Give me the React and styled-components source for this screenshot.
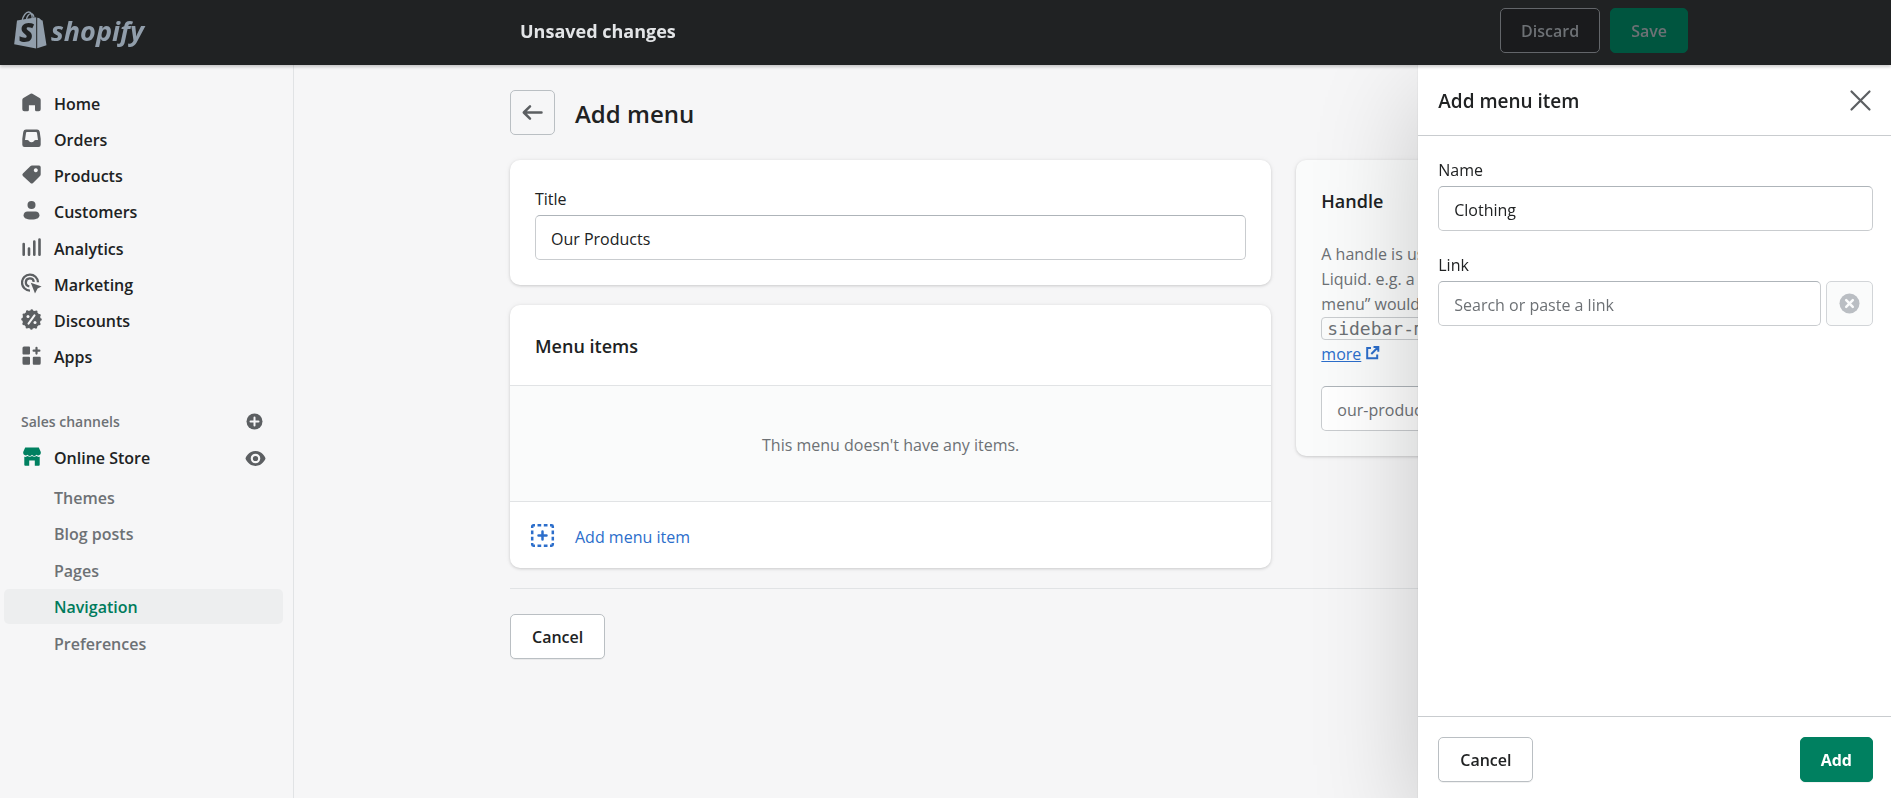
import { useState } from "react"
import styled, { createGlobalStyle } from "styled-components"

const mainLinks = [
    { label: "Home", icon: HomeIcon },
    { label: "Orders", icon: OrdersIcon },
    { label: "Products", icon: ProductsIcon },
    { label: "Customers", icon: CustomersIcon },
    { label: "Analytics", icon: AnalyticsIcon },
    { label: "Marketing", icon: MarketingIcon },
    { label: "Discounts", icon: DiscountsIcon },
    { label: "Apps", icon: AppsIcon },
]

const storeLinks = ["Themes", "Blog posts", "Pages", "Navigation", "Preferences"]

export default function App() {
    const [title, setTitle] = useState("Our Products")
    const [name, setName] = useState("Clothing")

    return (
        <>
            <GlobalStyle />
            <TopBar>
                <Logo href="#">
                    <BagIcon />
                    <span>shopify</span>
                </Logo>
                <SaveBar>
                    <h2>Unsaved changes</h2>
                    <BarButton disabled>Discard</BarButton>
                    <BarButton disabled $save>Save</BarButton>
                </SaveBar>
            </TopBar>
            <Body>
                <Sidebar>
                    <NavList>
                        {mainLinks.map(({ label, icon: Icon }) => (
                            <li key={label}>
                                <NavLink href="#"><Icon />{label}</NavLink>
                            </li>
                        ))}
                    </NavList>
                    <SectionTitle>
                        <span>Sales channels</span>
                        <IconButton aria-label="Add sales channel"><PlusIcon /></IconButton>
                    </SectionTitle>
                    <StoreRow>
                        <NavLink href="#"><StoreIcon />Online Store</NavLink>
                        <IconButton aria-label="View your online store"><EyeIcon /></IconButton>
                    </StoreRow>
                    <SubList>
                        {storeLinks.map((label) => (
                            <li key={label}>
                                <SubLink href="#" $active={label === "Navigation"}>{label}</SubLink>
                            </li>
                        ))}
                    </SubList>
                </Sidebar>
                <Main>
                    <Page>
                        <PageHeader>
                            <BackButton aria-label="Back"><BackIcon /></BackButton>
                            <h1>Add menu</h1>
                        </PageHeader>
                        <Columns>
                            <Stack>
                                <Card $padded>
                                    <Label htmlFor="title">Title</Label>
                                    <Input id="title" value={title} onChange={(e) => setTitle(e.target.value)} />
                                </Card>
                                <Card>
                                    <CardHeader>Menu items</CardHeader>
                                    <EmptyItems>This menu doesn't have any items.</EmptyItems>
                                    <AddItem><AddItemIcon />Add menu item</AddItem>
                                </Card>
                            </Stack>
                            <Card as="aside" $padded $subdued>
                                <HandleTitle id="handle-title">Handle</HandleTitle>
                                <HandleText>
                                    A handle is used to reference a menu in Liquid. e.g. a menu with the title “Sidebar menu” would have the handle <code>sidebar-menu</code>.{" "}
                                    <a href="#">Learn<br />more</a> <ExternalIcon />
                                </HandleText>
                                <Input aria-labelledby="handle-title" placeholder="our-products" />
                            </Card>
                        </Columns>
                        <PageFooter>
                            <Button>Cancel</Button>
                        </PageFooter>
                    </Page>
                </Main>
            </Body>
            <Drawer aria-label="Add menu item">
                <DrawerHeader>
                    <h2>Add menu item</h2>
                    <IconButton aria-label="Close"><CloseIcon /></IconButton>
                </DrawerHeader>
                <DrawerBody>
                    <div>
                        <Label htmlFor="name">Name</Label>
                        <Input id="name" value={name} onChange={(e) => setName(e.target.value)} />
                    </div>
                    <div>
                        <Label htmlFor="link">Link</Label>
                        <LinkRow>
                            <Input id="link" placeholder="Search or paste a link" />
                            <ClearButton disabled aria-label="Clear link"><ClearIcon /></ClearButton>
                        </LinkRow>
                    </div>
                </DrawerBody>
                <DrawerFooter>
                    <Button>Cancel</Button>
                    <Button $primary>Add</Button>
                </DrawerFooter>
            </Drawer>
        </>
    )
}

function BagIcon() {
    return (
        <svg width="33" height="38" viewBox="0 0 33 38" fill="#919eab">
            <path d="M3 9.6 22.2 6.3V37.4L.2 33.2z" />
            <path d="M23.2 6.8 25 6.9l2.6 2.3 1 .3 3.9 24.7-9.3 3.1z" />
            <path d="M8.2 9.5C9 4.8 12 1 14.6 1c2.600 0 3.600 3 3.600 6.600M12.400 8.600C13 5 15.200 2.600 17 2.600c1.800 0 2.800 1.800 3 4.200" fill="none" stroke="#919eab" strokeWidth="1.300" />
            <text x="5" y="31" fontFamily="Open Sans, sans-serif" fontSize="27" fontWeight="800" fontStyle="italic" fill="#202223">S</text>
        </svg>
    )
}

function HomeIcon() {
    return (
        <svg width="21" height="21" viewBox="0 0 21 21" fill="currentColor">
            <path d="M9.600 1.800a1.900 1.900 0 0 1 1.800 0l7.200 4.300a2.200 2.200 0 0 1 1.100 1.900v9.200a2 2 0 0 1-2 2h-2.200a1.500 1.500 0 0 1-1.500-1.500v-4.500H7.900v4.500a1.500 1.500 0 0 1-1.500 1.500H3.300a2 2 0 0 1-2-2V8a2.200 2.200 0 0 1 1.100-1.900z" />
        </svg>
    )
}

function OrdersIcon() {
    return (
        <svg width="21" height="21" viewBox="0 0 21 21" fill="currentColor" fillRule="evenodd">
            <path d="M5 1.500h11a2.800 2.800 0 0 1 2.700 2.200l1 7v6.100a2.200 2.200 0 0 1-2.200 2.200h-14a2.200 2.200 0 0 1-2.200-2.200v-6.100l1-7A2.800 2.800 0 0 1 5 1.500zM6 4a1 1 0 0 0-1 .9l-1 7h2.200c1.800 0 2 2.300 4.300 2.300s2.500-2.300 4.300-2.300H17l-1-7a1 1 0 0 0-1-.9z" />
        </svg>
    )
}

function ProductsIcon() {
    return (
        <svg width="21" height="21" viewBox="0 0 21 21" fill="currentColor" fillRule="evenodd">
            <path d="M11 1.500h7a1.700 1.700 0 0 1 1.700 1.700v7c0 .7-.2 1.200-.7 1.700l-7 7a1.800 1.800 0 0 1-2.500 0L1.900 11.900a1.800 1.800 0 0 1 0-2.500l7.400-7.200c.5-.5 1-.7 1.700-.7zM14.800 4.300a2 2 0 1 0 .01 0z" />
        </svg>
    )
}

function CustomersIcon() {
    return (
        <svg width="21" height="21" viewBox="0 0 21 21" fill="currentColor">
            <circle cx="10.500" cy="5" r="4" />
            <path d="M6.500 11.400h8c2.300 0 3.900 1.600 3.900 3.800 0 2.800-2.400 4.200-7.900 4.200s-7.900-1.400-7.900-4.200c0-2.200 1.600-3.800 3.900-3.800z" />
        </svg>
    )
}

function AnalyticsIcon() {
    return (
        <svg width="21" height="21" viewBox="0 0 21 21" stroke="currentColor" strokeWidth="2.600" strokeLinecap="round">
            <path d="M2.700 7v10.800M8 11.500v6.300M13.300 4.500v13.300M18.500 2.500v15.300" />
        </svg>
    )
}

function MarketingIcon() {
    return (
        <svg width="21" height="21" viewBox="0 0 21 21" fill="none" stroke="currentColor" strokeWidth="2.300">
            <path d="M9 17.600A8 8 0 1 1 17 9.300" />
            <path d="M8.300 13.300A4 4 0 1 1 12.800 8.800" />
            <path d="M9.800 9.800 20.600 13.400 16.600 15.400 14 20.500z" fill="currentColor" stroke="none" />
        </svg>
    )
}

function DiscountsIcon() {
    return (
        <svg width="21" height="21" viewBox="0 0 21 21">
            <circle cx="10.500" cy="10.500" r="9.200" fill="currentColor" />
            <circle cx="10.500" cy="10.500" r="9" fill="none" stroke="currentColor" strokeWidth="2.600" strokeDasharray="0 4.712" strokeLinecap="round" />
            <path d="M7.500 14.700 13.500 6.300" stroke="#f6f6f7" strokeWidth="2" strokeLinecap="round" />
            <circle cx="7" cy="7.600" r="1.500" fill="#f6f6f7" />
            <circle cx="14" cy="13.400" r="1.500" fill="#f6f6f7" />
        </svg>
    )
}

function AppsIcon() {
    return (
        <svg width="21" height="21" viewBox="0 0 21 21" fill="currentColor">
            <path d="M3 1.500h5a1 1 0 0 1 1 1v6a1 1 0 0 1-1 1H2.500a1 1 0 0 1-1-1V3A1.500 1.500 0 0 1 3 1.500zM2.500 11.800H8a1 1 0 0 1 1 1v6a1 1 0 0 1-1 1H3a1.500 1.500 0 0 1-1.500-1.500v-5.500a1 1 0 0 1 1-1zM12.800 11.800h5.900a1 1 0 0 1 1 1v5.500a1.500 1.500 0 0 1-1.500 1.500h-5.400a1 1 0 0 1-1-1v-6a1 1 0 0 1 1-1z" />
            <path d="M15.500 2.800v5.800M12.600 5.700h5.800" stroke="currentColor" strokeWidth="2.200" strokeLinecap="round" />
        </svg>
    )
}

function StoreIcon() {
    return (
        <svg width="21" height="21" viewBox="0 0 21 21" fill="#008060">
            <path d="M4.200 1.500h13.600l2 4.500v1.200a2.600 2.600 0 0 1-4.400 1.500 3 3 0 0 1-4.400 0 3 3 0 0 1-4.400 0A2.600 2.600 0 0 1 2.200 7.200V6z" />
            <path d="M3.300 10.800c1.400.3 2.400 0 3.300-.7 1.300 1 3 1 4.400 0 1.400 1 3.100 1 4.400 0 .9.700 1.900 1 3.300.7v8a.9.900 0 0 1-.9.900h-4v-5.200H8.200v5.200h-4a.9.900 0 0 1-.9-.9z" />
        </svg>
    )
}

function EyeIcon() {
    return (
        <svg width="21" height="21" viewBox="0 0 21 21">
            <path d="M20.300 9.800C20.200 9.500 17.400 3 10.500 3S.8 9.500.7 9.800a1.500 1.500 0 0 0 0 1.300C.8 11.500 3.600 18 10.500 18s9.700-6.500 9.800-6.900a1.500 1.500 0 0 0 0-1.300z" fill="#5c5f62" />
            <circle cx="10.500" cy="10.500" r="3.700" fill="#5c5f62" stroke="#f6f6f7" strokeWidth="2.200" />
        </svg>
    )
}

function PlusIcon() {
    return (
        <svg width="21" height="21" viewBox="0 0 21 21">
            <circle cx="10.500" cy="10.500" r="8" fill="#5c5f62" />
            <path d="M10.500 6.500v8M6.500 10.500h8" stroke="#f6f6f7" strokeWidth="2" strokeLinecap="round" />
        </svg>
    )
}

function BackIcon() {
    return (
        <svg width="25" height="25" viewBox="0 0 25 25" fill="none" stroke="#5c5f62" strokeWidth="2.500" strokeLinecap="round" strokeLinejoin="round">
            <path d="M21.500 12.500H4M10 6.300 3.800 12.500 10 18.700" />
        </svg>
    )
}

function AddItemIcon() {
    return (
        <svg width="25" height="25" viewBox="0 0 25 25" fill="none" stroke="#2c6ecb" strokeWidth="2.500">
            <path d="M2.200 5V3.400a1.200 1.200 0 0 1 1.200-1.200H5M20 2.200h1.600a1.200 1.200 0 0 1 1.200 1.200V5M22.800 20v1.600a1.200 1.200 0 0 1-1.200 1.200H20M5 22.800H3.400a1.200 1.200 0 0 1-1.200-1.200V20" />
            <path d="M7.500 2.200h3.700M13.800 2.200h3.700M7.500 22.800h3.700M13.800 22.800h3.700M2.200 7.500v3.700M2.200 13.800v3.700M22.800 7.500v3.700M22.800 13.800v3.700" />
            <path d="M12.500 8.500v8M8.500 12.500h8" strokeLinecap="round" />
        </svg>
    )
}

function ExternalIcon() {
    return (
        <svg width="15" height="15" viewBox="0 0 15 15" fill="none" stroke="#2c6ecb" strokeWidth="2">
            <path d="M6 3H2.200v10.200h10V9.500M8.500 2h4.800v4.800M13 2.300 6.300 9" />
        </svg>
    )
}

function CloseIcon() {
    return (
        <svg width="25" height="25" viewBox="0 0 25 25" fill="none" stroke="#5c5f62" strokeWidth="2.200" strokeLinecap="round">
            <path d="M3.500 3.500l18 18M21.500 3.500l-18 18" />
        </svg>
    )
}

function ClearIcon() {
    return (
        <svg width="21" height="21" viewBox="0 0 21 21">
            <circle cx="10.500" cy="10.500" r="10" fill="#babec3" />
            <path d="M7.200 7.200l6.600 6.600M13.800 7.200l-6.600 6.600" stroke="#fafbfb" strokeWidth="2.500" strokeLinecap="round" />
        </svg>
    )
}

const GlobalStyle = createGlobalStyle`
    * {
        box-sizing: border-box;
    }
    body {
        margin: 0;
        background-color: #f6f6f7;
        color: #202223;
        font-family: 'Open Sans', 'Noto Sans', sans-serif;
        font-size: 16px;
        line-height: 25px;
    }
    h1, h2, p, ul {
        margin: 0;
        padding: 0;
    }
    ul {
        list-style: none;
    }
    button, input {
        font: inherit;
    }
    svg {
        flex-shrink: 0;
    }
`

const TopBar = styled.header`
    display: flex;
    align-items: center;
    height: 65px;
    background-color: #202223;
    box-shadow: 0 2px 3px rgba(0, 0, 0, 0.2);
    position: sticky;
    top: 0;
    z-index: 3;
`

const Logo = styled.a`
    display: flex;
    align-items: center;
    gap: 4px;
    width: 317px;
    padding: 0 0 6px 14px;
    color: #919eab;
    text-decoration: none;
    span {
        padding-top: 2px;
        font-size: 27px;
        font-style: italic;
        font-weight: 700;
    }
`

const SaveBar = styled.div`
    flex: 1;
    display: flex;
    align-items: center;
    gap: 10px;
    max-width: 1168px;
    margin: 0 auto;
    padding-bottom: 4px;
    h2 {
        flex: 1;
        padding-top: 2px;
        color: #e3e5e7;
        font-size: 18px;
        font-weight: 700;
    }
`

const BarButton = styled.button`
    height: 45px;
    padding: 2px 20px 0;
    border: 1px solid ${(props) => (props.$save ? "#00553f" : "#63666a")};
    border-radius: 5px;
    background-color: ${(props) => (props.$save ? "#00553f" : "#1a1b1d")};
    color: #6d7175;
    font-weight: 600;
`

const Body = styled.div`
    display: flex;
    min-height: calc(100vh - 65px);
`

const Sidebar = styled.nav`
    flex-shrink: 0;
    width: 294px;
    padding: 21px 10px 20px 4px;
    border-right: 1px solid #e1e3e5;
`

const NavList = styled.ul`
    display: grid;
    grid-auto-rows: 1fr;
    height: 290px;
`

const NavLink = styled.a`
    display: flex;
    align-items: center;
    gap: 12px;
    height: 36px;
    padding-left: 17px;
    color: #202223;
    font-weight: 600;
    text-decoration: none;
    svg {
        margin-bottom: 4px;
        color: #5c5f62;
    }
`

const SectionTitle = styled.div`
    display: flex;
    align-items: center;
    justify-content: space-between;
    margin-top: 27px;
    padding: 0 18px 0 17px;
    height: 36px;
    color: #6d7175;
    font-size: 14px;
    font-weight: 600;
`

const StoreRow = styled.div`
    display: flex;
    align-items: center;
    justify-content: space-between;
    margin: 1px 0 4px;
    padding-right: 17px;
`

const IconButton = styled.button`
    display: flex;
    padding: 0;
    border: none;
    background: none;
    cursor: pointer;
`

const SubList = styled.ul`
    display: grid;
    grid-auto-rows: 1fr;
    height: 182px;
`

const SubLink = styled.a`
    display: block;
    padding: 2px 0 0 50px;
    border-radius: 5px;
    background-color: ${(props) => (props.$active ? "#edeeef" : "transparent")};
    color: ${(props) => (props.$active ? "#007b5c" : "#6d7175")};
    font-weight: 600;
    line-height: 33px;
    text-decoration: none;
`

const Main = styled.main`
    flex: 1;
    padding: 25px 40px 25px 42px;
`

const Page = styled.div`
    max-width: 1167px;
    margin: 0 auto;
`

const PageHeader = styled.div`
    display: flex;
    align-items: center;
    gap: 20px;
    margin-bottom: 25px;
    h1 {
        padding-top: 2px;
        font-size: 24px;
        font-weight: 600;
    }
`

const BackButton = styled.button`
    display: flex;
    align-items: center;
    justify-content: center;
    width: 45px;
    height: 45px;
    padding: 0;
    border: 1px solid #babfc3;
    border-radius: 5px;
    background: none;
`

const Columns = styled.div`
    display: grid;
    grid-template-columns: 2fr 1fr;
    align-items: start;
    gap: 25px;
`

const Stack = styled.div`
    display: grid;
    gap: 20px;
`

const Card = styled.section`
    padding: ${(props) => (props.$padded ? "25px" : "0")};
    border-radius: 10px;
    background-color: ${(props) => (props.$subdued ? "#fafbfb" : "#ffffff")};
    box-shadow: 0 0 6px rgba(23, 24, 24, 0.05), 0 1px 3px rgba(0, 0, 0, 0.15);
`

const Label = styled.label`
    display: block;
    padding-top: 2px;
    margin-bottom: 3px;
`

const Input = styled.input`
    display: block;
    width: 100%;
    height: 45px;
    padding: 2px 15px 0;
    border: 1px solid #c9cccf;
    border-top-color: #aeb4b9;
    border-radius: 5px;
    background-color: #ffffff;
    color: #202223;
    &::placeholder {
        color: #6d7175;
        opacity: 1;
    }
`

const CardHeader = styled.h2`
    padding: 29px 25px 26px;
    font-size: 18px;
    font-weight: 600;
`

const EmptyItems = styled.p`
    padding: 47px 25px 43px;
    border-top: 1px solid #e1e3e5;
    border-bottom: 1px solid #e1e3e5;
    background-color: #fafbfb;
    color: #6d7175;
    text-align: center;
`

const AddItem = styled.button`
    display: flex;
    align-items: center;
    gap: 20px;
    width: 100%;
    height: 66px;
    padding: 4px 20px 0;
    border: none;
    background: none;
    color: #2c6ecb;
    cursor: pointer;
    svg {
        margin-bottom: 4px;
    }
`

const HandleTitle = styled.h2`
    margin: 4px 0 28px;
    font-size: 18px;
    font-weight: 600;
`

const HandleText = styled.p`
    margin-bottom: 19px;
    color: #6d7175;
    code {
        padding: 0 5px;
        border: 1px solid #c9cccf;
        border-radius: 4px;
        font-family: 'DejaVu Sans Mono', monospace;
        font-size: 18px;
        line-height: 20px;
        white-space: nowrap;
    }
    a {
        color: #2c6ecb;
    }
`

const PageFooter = styled.div`
    margin-top: 20px;
    padding-top: 25px;
    border-top: 1px solid #e1e3e5;
`

const Button = styled.button`
    height: 45px;
    padding: 2px ${(props) => (props.$primary ? "20px" : "21px")} 0;
    border: 1px solid ${(props) => (props.$primary ? "#008060" : "#babfc3")};
    border-radius: 5px;
    background-color: ${(props) => (props.$primary ? "#008060" : "#ffffff")};
    color: ${(props) => (props.$primary ? "#ffffff" : "#202223")};
    font-weight: ${(props) => (props.$primary ? 700 : 600)};
    box-shadow: 0 1px 0 rgba(0, 0, 0, 0.05);
    cursor: pointer;
`

const Drawer = styled.aside`
    display: flex;
    flex-direction: column;
    width: 25%;
    background-color: #ffffff;
    box-shadow: 0 32px 100px rgba(0, 0, 0, 0.2), 0 0 1px rgba(0, 0, 0, 0.2);
    position: fixed;
    top: 65px;
    right: 0;
    bottom: 0;
    z-index: 2;
`

const DrawerHeader = styled.div`
    display: flex;
    align-items: center;
    justify-content: space-between;
    height: 71px;
    padding: 0 18px 0 20px;
    border-bottom: 1px solid #c9cccf;
    h2 {
        padding-top: 2px;
        font-size: 19px;
        font-weight: 600;
    }
`

const DrawerBody = styled.div`
    flex: 1;
    display: flex;
    flex-direction: column;
    gap: 20px;
    padding: 20px 18px 20px 20px;
`

const LinkRow = styled.div`
    display: flex;
    gap: 5px;
`

const ClearButton = styled.button`
    flex-shrink: 0;
    display: flex;
    align-items: center;
    justify-content: center;
    width: 47px;
    height: 45px;
    padding: 0;
    border: 1px solid #d2d5d8;
    border-radius: 5px;
    background-color: #fafbfb;
`

const DrawerFooter = styled.div`
    display: flex;
    justify-content: space-between;
    padding: 20px 18px 16px 20px;
    border-top: 1px solid #c9cccf;
`
